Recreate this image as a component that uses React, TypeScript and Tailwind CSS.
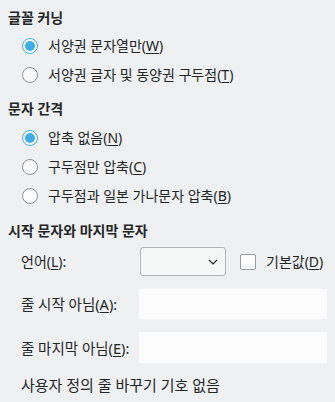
import { ReactNode } from 'react';

function Mn({ label, k, colon }: { label: string; k: string; colon?: boolean }) {
  return (
    <span>
      {label}(<span className="underline underline-offset-2 decoration-1">{k}</span>){colon ? ':' : ''}
    </span>
  );
}

function Heading({ children, className }: { children: ReactNode; className?: string }) {
  return <div className={`h-[18px] flex items-center pl-2 font-bold ${className ?? ''}`}>{children}</div>;
}

function Radio({ checked, children }: { checked?: boolean; children: ReactNode }) {
  return (
    <div className="h-[29px] flex items-center pl-[22px] gap-[10px]">
      <div
        className={`w-4 h-4 rounded-full border flex items-center justify-center bg-[#fcfcfc] ${
          checked ? 'border-[#3daee9]' : 'border-[#8f9193]'
        }`}
      >
        {checked && <div className="w-[10px] h-[10px] rounded-full bg-[#3daee9]" />}
      </div>
      {children}
    </div>
  );
}

export default function App() {
  return (
    <div className="w-[335px] h-[402px] bg-[#eff0f1] text-[#232627] text-[14px] leading-[18px] font-['Noto_Sans','Noto_Sans_CJK_KR',sans-serif] pt-[9px] overflow-hidden">
      <Heading>글꼴 커닝</Heading>
      <div className="mt-[4px]">
        <Radio checked>
          <Mn label="서양권 문자열만" k="W" />
        </Radio>
        <Radio>
          <Mn label="서양권 글자 및 동양권 구두점" k="T" />
        </Radio>
      </div>

      <Heading className="mt-[11px]">문자 간격</Heading>
      <div className="mt-[5px]">
        <Radio checked>
          <Mn label="압축 없음" k="N" />
        </Radio>
        <Radio>
          <Mn label="구두점만 압축" k="C" />
        </Radio>
        <Radio>
          <Mn label="구두점과 일본 가나문자 압축" k="B" />
        </Radio>
      </div>

      <Heading className="mt-[12px]">시작 문자와 마지막 문자</Heading>

      <div className="mt-[7px] h-[29px] flex items-center pl-[21px]">
        <div className="w-[119px]">
          <Mn label="언어" k="L" colon />
        </div>
        <div className="w-[86px] h-[29px] rounded-[3px] border border-[#b3b5b7] bg-[#f5f6f6] flex items-center justify-end pr-[7px]">
          <svg width="10" height="6" viewBox="0 0 10 6" fill="none">
            <path d="M1 1 L5 5 L9 1" stroke="#232627" strokeWidth="1.2" />
          </svg>
        </div>
        <div className="ml-[14px] w-4 h-4 rounded-[2px] border border-[#9a9c9e] bg-[#fcfcfc]" />
        <div className="ml-[10px]">
          <Mn label="기본값" k="D" />
        </div>
      </div>

      <div className="mt-[13px] h-[30px] flex items-center pl-[21px]">
        <div className="w-[118px] text-[14.5px]">
          <Mn label="줄 시작 아님" k="A" colon />
        </div>
        <div className="w-[188px] h-[30px] bg-[#fcfcfc]" />
      </div>

      <div className="mt-[13px] h-[31px] flex items-center pl-[21px]">
        <div className="w-[118px] text-[14.5px]">
          <Mn label="줄 마지막 아님" k="E" colon />
        </div>
        <div className="w-[188px] h-[31px] bg-[#fcfcfc]" />
      </div>

      <div className="mt-[13px] h-[18px] flex items-center pl-[21px] text-[15px]">사용자 정의 줄 바꾸기 기호 없음</div>
    </div>
  );
}
